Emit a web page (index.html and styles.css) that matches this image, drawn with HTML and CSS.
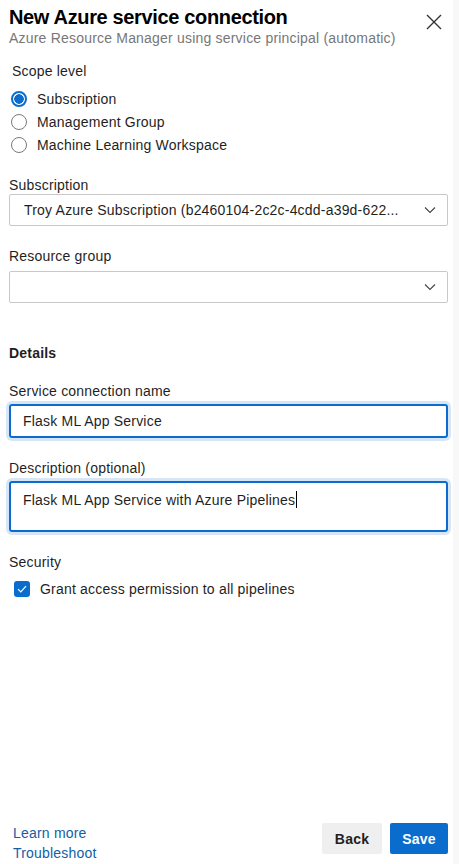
FILE: index.html
```html
<!DOCTYPE html>
<html lang="en">
<head>
<meta charset="utf-8">
<title>New Azure service connection</title>
<link rel="stylesheet" href="styles.css">
</head>
<body>
<div class="shell">
  <div class="panel">
    <header class="header">
      <div class="titles">
        <h1 class="title">New Azure service connection</h1>
        <div class="subtitle">Azure Resource Manager using service principal (automatic)</div>
      </div>
      <button class="close" aria-label="Close">
        <svg width="16" height="16" viewBox="0 0 16 16"><path d="M1 1L15 15M15 1L1 15" stroke="#333" stroke-width="1.4" fill="none"/></svg>
      </button>
    </header>

    <div class="scope">
      <div class="label">Scope level</div>
      <div class="radios">
        <div class="radio-row"><span class="radio checked"></span><span>Subscription</span></div>
        <div class="radio-row"><span class="radio"></span><span>Management Group</span></div>
        <div class="radio-row"><span class="radio"></span><span>Machine Learning Workspace</span></div>
      </div>
    </div>

    <div class="field first">
      <div class="label">Subscription</div>
      <div class="select">
        <span class="select-text">Troy Azure Subscription (b2460104-2c2c-4cdd-a39d-622...</span>
        <svg class="chev" width="12" height="8" viewBox="0 0 12 8"><path d="M1 1.5L6 6.5L11 1.5" stroke="#444" stroke-width="1.1" fill="none"/></svg>
      </div>
    </div>

    <div class="field">
      <div class="label">Resource group</div>
      <div class="select spaced">
        <span class="select-text"></span>
        <svg class="chev" width="12" height="8" viewBox="0 0 12 8"><path d="M1 1.5L6 6.5L11 1.5" stroke="#444" stroke-width="1.1" fill="none"/></svg>
      </div>
    </div>

    <div class="section-title">Details</div>

    <div class="field name-field">
      <div class="label">Service connection name</div>
      <div class="input focus">Flask ML App Service</div>
    </div>

    <div class="field desc-field">
      <div class="label">Description (optional)</div>
      <div class="input textarea focus">Flask ML App Service with Azure Pipelines<span class="caret"></span></div>
    </div>

    <div class="security">
      <div class="label">Security</div>
      <div class="check-row">
        <span class="checkbox">
          <svg width="10" height="8" viewBox="0 0 10 8"><path d="M1 4.2L3.8 7L9 1.2" stroke="#fff" stroke-width="1.2" fill="none"/></svg>
        </span>
        <span>Grant access permission to all pipelines</span>
      </div>
    </div>

    <footer class="footer">
      <div class="links">
        <a class="link">Learn more</a>
        <a class="link">Troubleshoot</a>
      </div>
      <div class="buttons">
        <button class="btn back">Back</button>
        <button class="btn save">Save</button>
      </div>
    </footer>
  </div>
  <div class="edge"></div>
</div>
</body>
</html>
```

FILE: styles.css
```css
* { box-sizing: border-box; }
html, body { margin: 0; padding: 0; height: 100%; }
body {
  font-family: "Liberation Sans", Arial, sans-serif;
  font-size: 14px;
  letter-spacing: 0.2px;
  color: #1f1f1f;
  background: #fff;
}
.shell {
  display: flex;
  height: 864px;
}
.panel {
  flex: 1;
  display: flex;
  flex-direction: column;
  padding: 0 5px 0 9px;
}
.edge {
  width: 6px;
  background: #f8f8f8;
}
.header {
  display: flex;
  justify-content: space-between;
  align-items: flex-start;
  padding-top: 5px;
}
.title {
  margin: 0;
  font-size: 20px;
  line-height: 24px;
  font-weight: 700;
  color: #000;
  letter-spacing: -0.35px;
}
.subtitle {
  font-size: 14px;
  line-height: 18px;
  color: #777;
}
.close {
  border: 0;
  background: none;
  padding: 0;
  margin: 9px 6px 0 0;
  width: 16px;
  height: 16px;
  display: flex;
}
.label {
  font-size: 14px;
  line-height: 18px;
  color: #1f1f1f;
}
.scope {
  margin-top: 15px;
  padding-left: 3px;
}
.radios {
  margin-top: 7px;
  margin-left: -1px;
}
.radio-row {
  display: flex;
  align-items: center;
  height: 23px;
  gap: 10px;
}
.radio {
  width: 16px;
  height: 16px;
  border-radius: 50%;
  border: 1px solid #7a7a7a;
  background: #fff;
  flex: none;
}
.radio.checked {
  border: 2px solid #0a6ccd;
  background: radial-gradient(circle, #0a6ccd 0 4.5px, #fff 5px);
}
.field { margin-top: 21px; }
.field.first { margin-top: 20px; }
.select {
  height: 32px;
  border: 1px solid #c8c8c8;
  border-radius: 2px;
  display: flex;
  align-items: center;
  justify-content: space-between;
  padding: 0 11px 0 14px;
}
.select.spaced { margin-top: 6px; }
.select-text {
  white-space: nowrap;
  overflow: hidden;
  color: #1f1f1f;
}
.chev { flex: none; }
.section-title {
  margin-top: 41px;
  font-weight: 700;
  line-height: 18px;
}
.name-field { margin-top: 20px; }
.desc-field { margin-top: 21px; }
.input {
  margin-top: 4px;
  height: 34px;
  border-radius: 3px;
  padding: 0 12px;
  display: flex;
  align-items: center;
  color: #1f1f1f;
}
.input.focus {
  border: 2px solid #0a6ccd;
  box-shadow: 0 0 0 3px #d6e6f6;
}
.textarea {
  height: 51px;
  align-items: flex-start;
  padding-top: 8px;
  line-height: 18px;
}
.caret {
  display: inline-block;
  width: 1px;
  height: 17px;
  background: #000;
  margin-left: 1px;
}
.security { margin-top: 21px; }
.check-row {
  margin-top: 10px;
  display: flex;
  align-items: center;
  gap: 10px;
  padding-left: 5px;
}
.checkbox {
  width: 16px;
  height: 16px;
  border-radius: 3px;
  background: #0a6ccd;
  display: flex;
  align-items: center;
  justify-content: center;
  flex: none;
}
.footer {
  margin-top: auto;
  display: flex;
  justify-content: space-between;
  align-items: flex-end;
  padding: 0 0 1px 4px;
}
.links {
  display: flex;
  flex-direction: column;
}
.link {
  color: #1160a8;
  line-height: 20px;
  font-size: 14px;
}
.buttons {
  display: flex;
  gap: 8px;
  margin-bottom: 9px;
}
.btn {
  font-family: "Liberation Sans", Arial, sans-serif;
  font-size: 14px;
  font-weight: 700;
  letter-spacing: 0.2px;
  height: 31px;
  border: 0;
  border-radius: 2px;
  padding: 0;
}
.btn.back { background: #efefef; color: #1f1f1f; width: 60px; margin-left: 1px; }
.btn.save { background: #0a6ccd; color: #fff; width: 58px; }
```
